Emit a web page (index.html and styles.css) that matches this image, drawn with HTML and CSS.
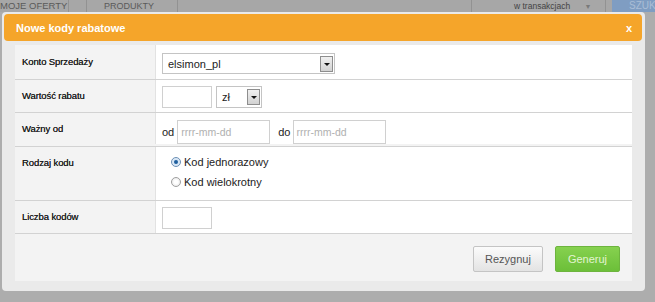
FILE: index.html
```
<!DOCTYPE html>
<html>
    <head>
        <meta charset="UTF-8">
        <title>Nowe kody rabatowe</title>
        <link rel="stylesheet" href="styles.css">
    </head>
    <body>
        <div class="topbar">
            <div class="tab first">MOJE OFERTY</div>
            <div class="tab gap"></div>
            <div class="tab">PRODUKTY</div>
            <div class="fill"></div>
            <div class="scope">w transakcjach <span class="tri">&#9660;</span></div>
            <div class="search">SZUK</div>
        </div>

        <div class="dialog">
            <div class="head">
                <span class="title">Nowe kody rabatowe</span>
                <span class="close">x</span>
            </div>
            <div class="panel">
                <div class="row r1">
                    <div class="label">Konto Sprzedaży</div>
                    <div class="value">
                        <div class="select wide"><span>elsimon_pl</span><i class="arr"></i></div>
                    </div>
                </div>
                <div class="row r2">
                    <div class="label">Wartość rabatu</div>
                    <div class="value">
                        <div class="input small"></div>
                        <div class="select cur"><span>zł</span><i class="arr"></i></div>
                    </div>
                </div>
                <div class="row r3">
                    <div class="label">Ważny od</div>
                    <div class="value">
                        <span class="txt">od</span>
                        <div class="input date">rrrr-mm-dd</div>
                        <span class="txt to">do</span>
                        <div class="input date">rrrr-mm-dd</div>
                    </div>
                </div>
                <div class="row r4">
                    <div class="label">Rodzaj kodu</div>
                    <div class="value radios">
                        <div class="radio on"><i></i>Kod jednorazowy</div>
                        <div class="radio"><i></i>Kod wielokrotny</div>
                    </div>
                </div>
                <div class="row r5">
                    <div class="label">Liczba kodów</div>
                    <div class="value">
                        <div class="input small"></div>
                    </div>
                </div>
                <div class="actions">
                    <div class="btn cancel">Rezygnuj</div>
                    <div class="btn ok">Generuj</div>
                </div>
            </div>
        </div>
    </body>
</html>
```

FILE: styles.css
```
*{ margin:0; padding:0; box-sizing:border-box; }
body{
    background: #adadad;
    font-family: "Liberation Sans", Arial, sans-serif;
    color: #333;
}

/* pasek pod nakladka */
.topbar{
    height: 12px;
    display: flex;
    background: #a7a7a7;
    color: #5a5a5a;
    font-size: 9px;
    line-height: 12px;
    overflow: hidden;
}
.topbar .tab{
    border-right: 1px solid #929292;
    padding: 0 23px 0 17px;
}
.topbar .tab.first{
    width: 69px;
    padding: 0;
    font-size: 9.5px;
}
.topbar .tab.gap{
    width: 18px;
    padding: 0;
}
.topbar .fill{
    flex: 1;
    border-right: 1px solid #929292;
}
.topbar .scope{
    width: 134px;
    padding-left: 42px;
    font-size: 8.5px;
    color: #444;
    border-right: 1px solid #929292;
}
.topbar .scope .tri{
    font-size: 7px;
    color: #7a7a7a;
    margin-left: 12px;
}
.topbar .search{
    width: 43px;
    margin-left: 6px;
    background: #7f9dc2;
    color: #aabdd6;
    font-size: 10px;
    padding-left: 17px;
    white-space: nowrap;
}

/* okno */
.dialog{
    width: 643px;
    height: 279px;
    margin-left: 2px;
    padding: 2px 3px 10px 2px;
    background: #eaeaea;
    border-radius: 4px;
}
.head{
    height: 27px;
    display: flex;
    align-items: center;
    justify-content: space-between;
    padding: 0 10px 0 12px;
    background: #f5a52a;
    border-radius: 4px;
    color: #fff;
    font-weight: bold;
}
.head .title{
    font-size: 11px;
}
.head .close{
    font-size: 11px;
}

.panel{
    margin: 4px 10px 0 11px;
    background: #f3f3f3;
    height: 236px;
}
.row{
    display: grid;
    grid-template-columns: 140px 1fr;
    border-bottom: 1px solid #d2d2d2;
}
.row.r1{ height: 35px; }
.row.r2{ height: 33px; }
.row.r3{ height: 34px; }
.row.r4{ height: 54px; }
.row.r5{ height: 33px; }

.label{
    padding: 10px 0 0 7px;
    font-size: 9.5px;
    line-height: 12px;
    color: #1e1e1e;
    letter-spacing: -0.1px;
    text-shadow: 0 0 0.4px #333;
}
.row.r1 .label{ padding-top: 11px; }
.value{
    background: #fff;
    border-left: 1px solid #e2e2e2;
    padding: 6px 0 0 6px;
    display: flex;
    align-items: flex-start;
    font-size: 11px;
    color: #222;
}
.row.r1 .value{ padding-top: 8px; }
.row.r3 .value{ padding-top: 6px; align-items: center; height: 31px; }
.row.r5 .value{ padding-top: 6px; }

.select{
    height: 21px;
    border: 1px solid #c4c4c4;
    background: #fff;
    display: flex;
    align-items: center;
    justify-content: space-between;
    padding: 0 1px 0 5px;
}
.select.wide{ width: 173px; }
.select.cur{ width: 46px; margin-left: 4px; height: 22px; padding-left: 5px; }
.select .arr{
    width: 13px;
    height: 16px;
    border: 1px solid #8e8e8e;
    background: linear-gradient(#f0f0f0, #d2d2d2);
    position: relative;
}
.select .arr:after{
    content: "";
    position: absolute;
    left: 3px;
    top: 6px;
    border: 3px solid transparent;
    border-top: 3px solid #111;
    border-bottom: 0;
}

.input{
    height: 22px;
    border: 1px solid #d0d0d0;
    background: #fff;
}
.input.small{ width: 50px; }
.input.date{
    width: 93px;
    height: 24px;
    color: #b0b0b0;
    font-size: 10.5px;
    line-height: 22px;
    padding-left: 3px;
}
.txt{ margin-right: 3px; }
.txt.to{ margin-left: 8px; margin-right: 2px; }

.radios{
    flex-direction: column;
    padding: 5px 0 0 15px;
}
.radio{
    display: flex;
    align-items: center;
    height: 20px;
}
.radio i{
    width: 10px;
    height: 10px;
    border-radius: 50%;
    border: 1px solid #a0a0a0;
    background: radial-gradient(#fff 30%, #e0e0e0);
    margin-right: 3px;
    position: relative;
}
.radio.on i{
    border-color: #6b8fb5;
    background: radial-gradient(#cfe2f5 20%, #e6eef7);
}
.radio.on i:after{
    content: "";
    position: absolute;
    left: 2px;
    top: 2px;
    width: 4px;
    height: 4px;
    border-radius: 50%;
    background: #1f5f9e;
}

.actions{
    display: flex;
    justify-content: flex-end;
    gap: 12px;
    padding: 12px 12px 0 0;
}
.btn{
    height: 26px;
    line-height: 24px;
    text-align: center;
    font-size: 11px;
    border-radius: 2px;
    border: 1px solid #c4c4c4;
}
.btn.cancel{
    width: 70px;
    background: linear-gradient(#fbfbfb, #e3e3e3);
    color: #555;
}
.btn.ok{
    width: 65px;
    background: linear-gradient(#86d14f, #6cbf39);
    border-color: #6db43e;
    color: #e3f4d2;
}
```
